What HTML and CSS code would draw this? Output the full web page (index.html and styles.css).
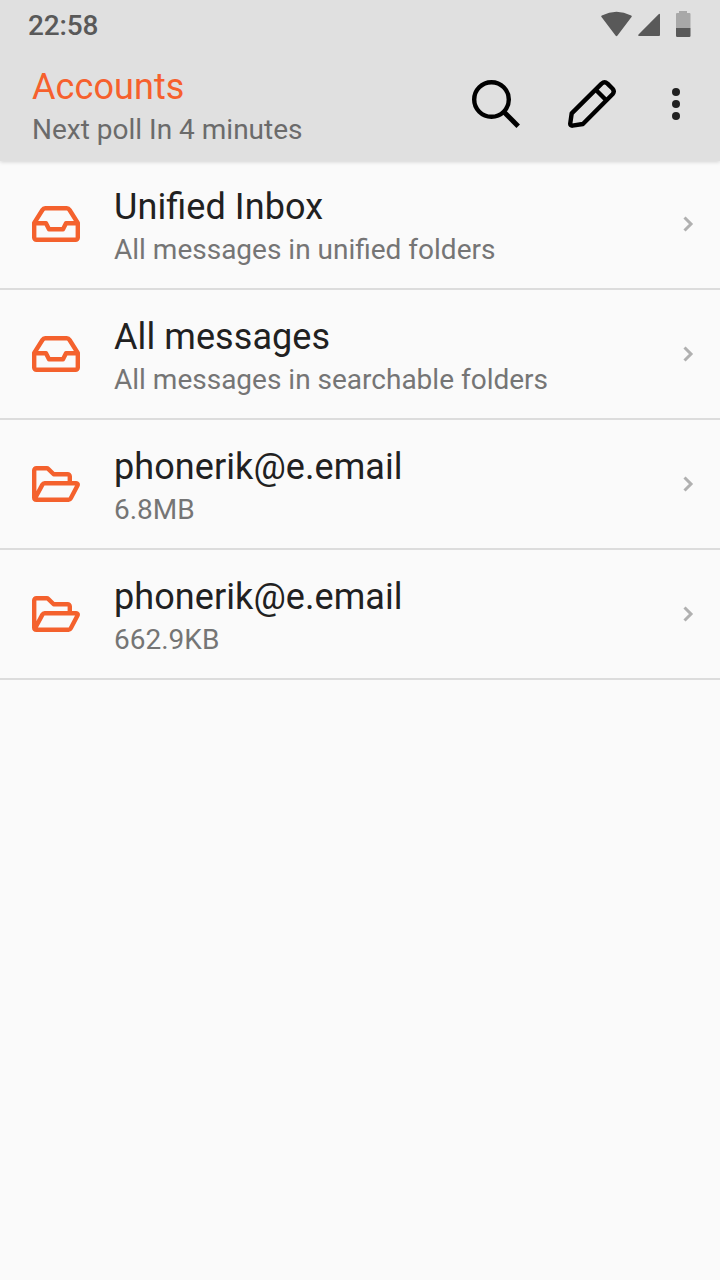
FILE: index.html
```html
<!DOCTYPE html>
<html lang="en">
<head>
<meta charset="utf-8">
<title>Accounts</title>
<link rel="stylesheet" href="styles.css">
</head>
<body>
<svg class="symbols" width="0" height="0">
  <symbol id="inbox" viewBox="0 0 48 36">
    <path d="M2.200 17 10.400 4Q11.500 2.200 13.200 2.200H34.800Q36.500 2.200 37.600 4L45.800 17V31.600a2.200 2.200 0 0 1-2.200 2.200H4.400a2.200 2.200 0 0 1-2.200-2.200ZM2 17.200H14L17 23.200H31L34 17.200H46"/>
  </symbol>
  <symbol id="folder" viewBox="0 0 48 36">
    <path d="M2.200 31.600V4.400a2.200 2.200 0 0 1 2.200-2.200H14.800a2.200 2.200 0 0 1 1.400.6L21.700 8.200H35.600a2.200 2.200 0 0 1 2.200 2.200V16M2.800 32.800 10.400 18.600Q11.200 17.200 12.600 17.200H44Q46.400 17.400 45.500 19.500L38.800 32.300Q38 33.800 36.600 33.800H4.400Q2.200 33.800 2.200 31.600"/>
  </symbol>
  <symbol id="chevron" viewBox="0 0 12 18">
    <path d="M2.500 2.500 9 9 2.500 15.500"/>
  </symbol>
</svg>
<header class="top">
  <div class="status">
    <span class="clock">22:58</span>
    <svg class="status-icons" width="92" height="28" viewBox="0 0 92 28">
      <path d="M1.500 6Q0.700 5 1.800 4.400Q16.500-2.800 31.200 4.400Q32.300 5 31.500 6L17.500 24.600Q16.500 25.700 15.500 24.600Z"/>
      <path d="M58.600 3.200Q60 2 60 3.600V24q0 1-1 1H39Q37.400 25 38.500 23.600Z"/>
      <path class="battery-empty" d="M79 0h8v2h2.400q1.100 0 1.100 1.100V17H76V3.100Q76 2 77.100 2H79Z"/>
      <path d="M76 17H90.500V24.800Q90.500 26 89.300 26H77.200Q76 26 76 24.800Z"/>
    </svg>
  </div>
  <div class="bar">
    <div class="heading">
      <h1 class="title accent">Accounts</h1>
      <p class="sub dark">Next poll In 4 minutes</p>
    </div>
    <svg class="action" width="48" height="48" viewBox="0 0 48 48">
      <circle cx="19.500" cy="19.500" r="17.300"/><path class="handle" d="M32 32 46.200 46.200"/>
    </svg>
    <svg class="action pencil" width="48" height="48" viewBox="0 0 48 48">
      <path d="M3.700 33.400 33.600 3.600Q36.600 1 39.500 3.600L44.400 8.500Q47 11.400 44.500 14.300L14.900 44 4.300 45.700Q2.200 45.700 2.200 43.700ZM27.500 9.500 38.500 20.500"/>
    </svg>
    <svg class="more" width="8" height="32" viewBox="0 0 8 32">
      <circle cx="4" cy="4" r="4"/><circle cx="4" cy="16" r="4"/><circle cx="4" cy="28" r="4"/>
    </svg>
  </div>
</header>
<main class="list">
  <div class="row">
    <svg class="icon" width="48" height="36"><use href="#inbox"/></svg>
    <div class="text"><p class="title">Unified Inbox</p><p class="sub">All messages in unified folders</p></div>
    <svg class="chevron" width="12" height="18"><use href="#chevron"/></svg>
  </div>
  <div class="row">
    <svg class="icon" width="48" height="36"><use href="#inbox"/></svg>
    <div class="text"><p class="title">All messages</p><p class="sub">All messages in searchable folders</p></div>
    <svg class="chevron" width="12" height="18"><use href="#chevron"/></svg>
  </div>
  <div class="row">
    <svg class="icon" width="48" height="36"><use href="#folder"/></svg>
    <div class="text"><p class="title">phonerik@e.email</p><p class="sub">6.8MB</p></div>
    <svg class="chevron" width="12" height="18"><use href="#chevron"/></svg>
  </div>
  <div class="row">
    <svg class="icon" width="48" height="36"><use href="#folder"/></svg>
    <div class="text"><p class="title">phonerik@e.email</p><p class="sub">662.9KB</p></div>
    <svg class="chevron" width="12" height="18"><use href="#chevron"/></svg>
  </div>
</main>
</body>
</html>
```
FILE: styles.css
```css
* { box-sizing: border-box; margin: 0; padding: 0; }
body { min-height: 1280px; background: #fafafa; font-family: Roboto, sans-serif; font-feature-settings: "liga" 1; }
svg { display: block; flex: none; }
.symbols { position: absolute; }
.top { height: 161px; background: #e0e0e0; box-shadow: 0 1px 4px rgba(0, 0, 0, .16); }
.status { height: 48px; display: flex; justify-content: space-between; padding: 11px 28px 0 28px; }
.clock { font-size: 28px; line-height: 30px; font-weight: 500; color: #595959; letter-spacing: -.15px; }
.status-icons { fill: #595959; }
.battery-empty { fill: #a8a8a8; }
.bar { height: 112px; display: flex; align-items: center; padding: 0 40px 0 32px; }
.heading { flex: 1; padding-top: 4px; }
.title { font-size: 36px; line-height: 42px; font-weight: 400; color: #212121; white-space: nowrap; letter-spacing: .08px; }
.sub { font-size: 28px; line-height: 33px; margin-top: 5px; color: #757575; white-space: nowrap; }
.title.accent { color: #f6602d; }
.sub.dark { color: #6b6b6b; }
.action { fill: none; stroke: #000; stroke-width: 4.4; }
.handle { stroke-width: 5; }
.pencil { margin: 0 56px 0 48px; stroke-linejoin: round; }
.more { fill: #212121; }
.list { display: flex; flex-direction: column; margin-top: -1px; }
.row { height: 130px; display: flex; align-items: center; padding: 0 26px 0 32px; border-bottom: 2px solid #dcdcdc; }
.icon { fill: none; stroke: #f4612d; stroke-width: 4.4; stroke-linejoin: round; }
.text { flex: 1; margin-left: 34px; padding-top: 4px; }
.chevron { fill: none; stroke: #b0b0b0; stroke-width: 3; }
```
